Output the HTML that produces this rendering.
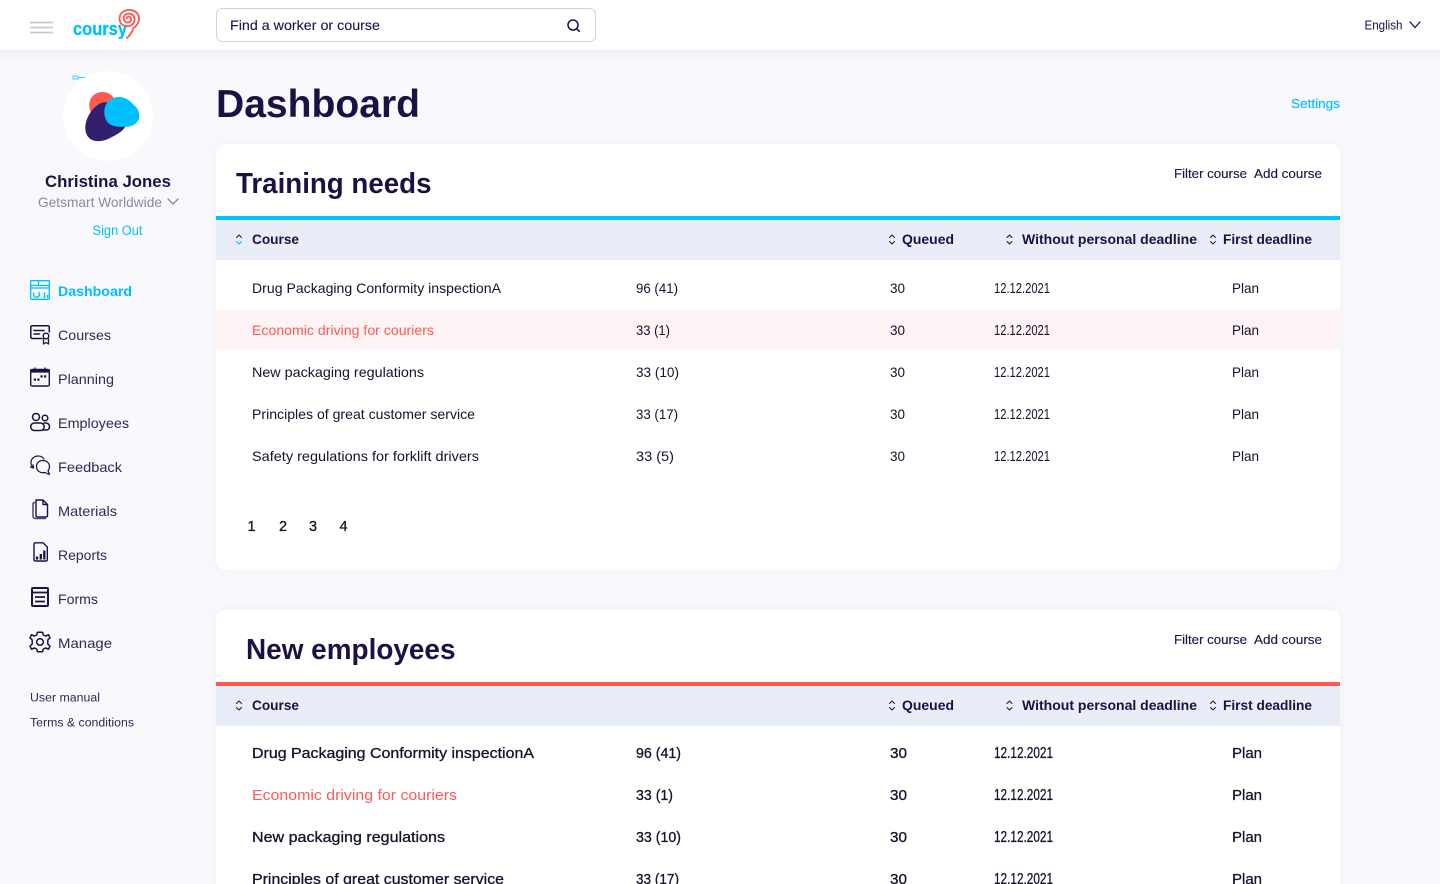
<!DOCTYPE html>
<html lang="en"><head><meta charset="utf-8"><title>Coursy Dashboard</title>
<style>
html,body{margin:0;padding:0;background:#f9f9fd;overflow:hidden;width:1440px;height:884px}
svg{display:block;position:absolute;left:0;top:0}
text{font-family:"Liberation Sans",sans-serif;fill:#1b1145}
.b{font-weight:700}
.m{stroke:#1b1145;stroke-width:.25}
.th{font-weight:700;font-size:14px}
.r{font-size:14px;fill:#15122b}
.r2{font-size:15px;fill:#15122b;stroke:#15122b;stroke-width:.3}
.d{font-size:14.5px;fill:#15122b}
.d2{font-size:15.5px;fill:#15122b;stroke:#15122b;stroke-width:.3}
.nav{font-size:14px;fill:#2f2858}
.small{font-size:11.5px;fill:#2f2858}
.red{fill:#ff5a52;stroke:none}
.i{fill:none;stroke:#1b1145;stroke-width:1.6;stroke-linecap:round;stroke-linejoin:round}
.s{fill:none;stroke:#1b1145;stroke-width:1;stroke-linecap:round;stroke-linejoin:round}
</style></head><body>
<svg width="1440" height="884" viewBox="0 0 1440 884" xmlns="http://www.w3.org/2000/svg">
<defs>
<linearGradient id="g" x1="0" y1="0" x2="0" y2="1"><stop offset="0" stop-color="#f1f1f5"/><stop offset="1" stop-color="#f9f9fd"/></linearGradient>
<filter id="sh" x="-5%" y="-10%" width="110%" height="120%"><feDropShadow dx="0" dy="0" stdDeviation="6" flood-color="#1b1145" flood-opacity=".035"/></filter>
</defs>
<rect width="1440" height="884" fill="#f9f9fd"/>
<rect y="50" width="1440" height="14" fill="url(#g)"/>
<rect width="1440" height="50" fill="#fff"/>

<!-- top bar -->
<path d="M30 22.500H53M30 27.500H53M30 32.500H53" stroke="#c8c6d6" stroke-width="1.700" fill="none"/>
<text x="73" y="35" font-size="18" font-weight="700" style="fill:#00bfff;stroke:#00bfff;stroke-width:.3" textLength="54" lengthAdjust="spacingAndGlyphs">coursy</text>
<path d="M127 38C130 35 132.500 31.500 133.500 28C138 25 140 20 138.500 15.500C136.500 10.500 130.500 9 125.500 10.500C120.500 12 118.500 17 120 21.500C121.500 26 127.500 27.500 131.500 25C135 22.500 135.500 17.500 132.500 15C129.500 12.500 125 13.500 123.800 17C123 20 125.500 23 128.500 22.500C131 22 132 19 130.300 17.300C129 16 127 16.500 126.800 18.300" fill="none" stroke="#ff5a52" stroke-width="1.900" stroke-linecap="round"/>
<rect x="216.500" y="8.500" width="379" height="33" rx="6" fill="#fff" stroke="#d2d0dd"/>
<text x="230" y="30" font-size="14" class="m" style="stroke-width:.1" textLength="150" lengthAdjust="spacingAndGlyphs">Find a worker or course</text>
<circle cx="573" cy="25" r="5" fill="none" stroke="#1b1145" stroke-width="1.500"/>
<path d="M576.800 28.800L579.300 31.300" stroke="#1b1145" stroke-width="1.500" stroke-linecap="round"/>
<text x="1364.500" y="29.500" font-size="13" textLength="38" lengthAdjust="spacingAndGlyphs">English</text>
<path d="M1410 22L1415 27.500L1420 22" class="i" style="stroke-width:1.300"/>

<!-- sidebar profile -->
<circle cx="108" cy="116" r="45" fill="#fff"/>
<path d="M73 76H78V79H73ZM78 77.500H85" fill="none" stroke="#00bfff" stroke-width=".7"/>
<path d="M89.300 105C89.300 97 95 92 103 92C111 92 116 99 116 106C112 116 100 120 94 117C91 114 89.300 110 89.300 105Z" fill="#ff5a52"/>
<path d="M85.300 128C85.300 118 92 108.500 99 104C109 98 127 108 126.500 122C126 130 118 134 111 137.500C104 141.500 97 142 92 140C88 138 85.300 134 85.300 128Z" fill="#32206f"/>
<path d="M104.300 112C104.300 103 111 97 119 97C125 97 129 100 133 104C137 107.500 139.300 111 139.300 116C139.300 122 134 126.500 126 126.800C120 127 113 127 109 123.500C106 121 104.300 117 104.300 112Z" fill="#00bfff"/>
<text x="45" y="187" font-size="17" class="b" textLength="126" lengthAdjust="spacingAndGlyphs">Christina Jones</text>
<text x="38" y="207" font-size="14" style="fill:#8b889f" textLength="124" lengthAdjust="spacingAndGlyphs">Getsmart Worldwide</text>
<path d="M168 199L173 204L178 199" fill="none" stroke="#8b889f" stroke-width="1.300" stroke-linecap="round" stroke-linejoin="round"/>
<text x="92.500" y="235" font-size="13.500" style="fill:#00bfff" textLength="50" lengthAdjust="spacingAndGlyphs">Sign Out</text>

<!-- nav -->
<g fill="none" stroke="#00bfff" stroke-width="1.300">
<rect x="30.700" y="280.700" width="18.600" height="18.600" rx="1"/>
<path d="M30.700 285.500H49.300M38.500 280.700V285.500M30.700 288H49.300"/>
<path d="M34 292.500A3 3 0 1 0 38.500 292M44.500 292.500V298M47.500 295V298" stroke-width="1.400"/>
</g>
<text x="58" y="296" font-size="14" class="b" style="fill:#00bfff" textLength="74" lengthAdjust="spacingAndGlyphs">Dashboard</text>

<path d="M42 338.500H32.500Q30.800 338.500 30.800 336.500V327.500Q30.800 325.800 32.500 325.800H47.500Q49.300 325.800 49.300 327.500V332M34 330.500H44M34 334H39.500" class="i" style="stroke-width:1.500"/>
<circle cx="46" cy="336" r="2.800" class="i" style="stroke-width:1.400"/>
<path d="M43.500 339V344L46 342.500L48.500 344V339" class="i" style="stroke-width:1.300"/>
<text x="58" y="340" class="nav" textLength="53" lengthAdjust="spacingAndGlyphs">Courses</text>

<rect x="30.700" y="369.500" width="18.600" height="16.500" rx="1.500" class="i" style="stroke-width:1.400"/>
<path d="M30.700 370H49.300V372H30.700Z" fill="#1b1145" stroke="#1b1145" stroke-width="1.300"/>
<path d="M35 367.500V369.500M45 367.500V369.500" stroke="#1b1145" stroke-width="1.300"/>
<rect x="33.800" y="378.500" width="2.200" height="2.200" fill="#1b1145"/><rect x="37.300" y="378.500" width="2.200" height="2.200" fill="#1b1145"/>
<rect x="40.500" y="375.300" width="2.200" height="2.200" fill="#1b1145"/><rect x="44" y="375.300" width="2.200" height="2.200" fill="#1b1145"/>
<text x="58" y="384" class="nav" textLength="56" lengthAdjust="spacingAndGlyphs">Planning</text>

<circle cx="36" cy="417" r="3.500" class="i" style="stroke-width:1.500"/>
<circle cx="45" cy="418" r="2.800" class="i" style="stroke-width:1.500"/>
<rect x="30.700" y="423" width="13.500" height="7.500" rx="3.700" class="i" style="stroke-width:1.500"/>
<path d="M44 423H46Q49.500 423.500 49.500 426.500Q49.500 430 46 430H43.500" class="i" style="stroke-width:1.500"/>
<text x="58" y="428" class="nav" textLength="71" lengthAdjust="spacingAndGlyphs">Employees</text>

<path d="M33.500 468C30.500 465 30 460.500 33 458C36.500 455 42 455.500 44 459M33.500 468L33 464.800M33.500 468L30.500 467" class="i" style="stroke-width:1.200"/>
<path d="M42.500 460.500C46.500 460.500 49.500 463 49.500 466.500C49.500 468 49 469.500 48 470.500L49.500 474.500L45 472.500C40.500 473.500 36.500 471 36.500 466.500C36.500 463 39 460.500 42.500 460.500Z" class="i" style="stroke-width:1.200"/>
<text x="58" y="472" class="nav" textLength="64" lengthAdjust="spacingAndGlyphs">Feedback</text>

<path d="M36 500H43L47.500 504.500V515.500Q47.500 517 46 517H37.500Q36 517 36 515.500ZM43 500V504.500H47.500" class="i" style="stroke-width:1.400"/>
<path d="M36 502.500H34.300Q33 502.500 33 504V516Q33 518.500 35.500 518.500H45.500" class="i" style="stroke-width:1.500;stroke:#4d4577"/>
<text x="58" y="516" class="nav" textLength="59" lengthAdjust="spacingAndGlyphs">Materials</text>

<path d="M35.500 542.800H43L47.300 547V559.500Q47.300 561 46 561H35.500Q34 561 34 559.500V544.300Q34 542.800 35.500 542.800Z" class="i" style="stroke-width:1.400"/>
<path d="M37 556.500V559.500M40.800 554V559.500M44.300 550.500V559.500" stroke="#1b1145" stroke-width="2.300"/>
<text x="58" y="560" class="nav" textLength="49" lengthAdjust="spacingAndGlyphs">Reports</text>

<rect x="32" y="588" width="16" height="18" rx="1" fill="none" stroke="#1b1145" stroke-width="2"/>
<path d="M32 592.500H48M35 597H45M35 601.500H45" stroke="#1b1145" stroke-width="1.800" fill="none"/>
<text x="58" y="604" class="nav" textLength="40" lengthAdjust="spacingAndGlyphs">Forms</text>

<path d="M37.500 632.200H42.500L43.300 635L45.800 636.100L48.500 634.700L50 637.800L47.800 640V644L50 646.200L48.500 649.300L45.800 647.900L43.300 649L42.500 651.800H37.500L36.700 649L34.200 647.900L31.500 649.300L30 646.200L32.200 644V640L30 637.800L31.500 634.700L34.200 636.100L36.700 635Z" class="i" style="stroke-width:1.500"/>
<circle cx="40" cy="642" r="3.300" class="i" style="stroke-width:1.500"/>
<text x="58" y="648" class="nav" textLength="54" lengthAdjust="spacingAndGlyphs">Manage</text>

<text x="30" y="701.500" class="small" textLength="70" lengthAdjust="spacingAndGlyphs">User manual</text>
<text x="30" y="726.500" class="small" textLength="104" lengthAdjust="spacingAndGlyphs">Terms &amp; conditions</text>

<!-- heading -->
<text x="216" y="117" font-size="39" class="b" textLength="204" lengthAdjust="spacingAndGlyphs">Dashboard</text>
<text x="1291" y="108" font-size="13" style="fill:#00bfff;stroke:#00bfff;stroke-width:.15" textLength="49" lengthAdjust="spacingAndGlyphs">Settings</text>

<!-- card 1 -->
<rect x="216" y="144" width="1124" height="426" rx="10" fill="#fff" filter="url(#sh)"/>
<text x="236" y="193" font-size="28.500" class="b" textLength="195.500" lengthAdjust="spacingAndGlyphs">Training needs</text>
<text x="1174" y="178" font-size="13" class="m" style="stroke-width:.12" textLength="73" lengthAdjust="spacingAndGlyphs">Filter course</text>
<text x="1254" y="178" font-size="13" class="m" style="stroke-width:.12" textLength="68" lengthAdjust="spacingAndGlyphs">Add course</text>
<rect x="216" y="216" width="1124" height="4" fill="#00c2ff"/>
<rect x="216" y="220" width="1124" height="40" fill="#e8edf8"/>
<path d="M236.500 237.500L239 235L241.500 237.500" class="s"/><path d="M236.500 241.500L239 244L241.500 241.500" class="s" style="stroke:#00bfff"/>
<path d="M889.500 237.500L892 235L894.500 237.500M889.500 241.500L892 244L894.500 241.500" class="s"/>
<path d="M1007 237.500L1009.500 235L1012 237.500M1007 241.500L1009.500 244L1012 241.500" class="s"/>
<path d="M1210.500 237.500L1213 235L1215.500 237.500M1210.500 241.500L1213 244L1215.500 241.500" class="s"/>
<text x="252" y="244" class="th" textLength="47" lengthAdjust="spacingAndGlyphs">Course</text>
<text x="902" y="244" class="th" textLength="52" lengthAdjust="spacingAndGlyphs">Queued</text>
<text x="1022" y="244" class="th" textLength="175" lengthAdjust="spacingAndGlyphs">Without personal deadline</text>
<text x="1223" y="244" class="th" textLength="89" lengthAdjust="spacingAndGlyphs">First deadline</text>

<rect x="216" y="310" width="1124" height="40" fill="#fff4f5"/>

<text x="252" y="293" class="r" textLength="249" lengthAdjust="spacingAndGlyphs">Drug Packaging Conformity inspectionA</text>
<text x="636" y="293" class="r" textLength="42" lengthAdjust="spacingAndGlyphs">96 (41)</text>
<text x="890" y="293" class="r" textLength="15" lengthAdjust="spacingAndGlyphs">30</text>
<text x="994" y="293" class="d" textLength="56" lengthAdjust="spacingAndGlyphs">12.12.2021</text>
<text x="1232" y="293" class="r" textLength="27" lengthAdjust="spacingAndGlyphs">Plan</text>

<text x="252" y="335" class="r red" textLength="182" lengthAdjust="spacingAndGlyphs">Economic driving for couriers</text>
<text x="636" y="335" class="r" textLength="34" lengthAdjust="spacingAndGlyphs">33 (1)</text>
<text x="890" y="335" class="r" textLength="15" lengthAdjust="spacingAndGlyphs">30</text>
<text x="994" y="335" class="d" textLength="56" lengthAdjust="spacingAndGlyphs">12.12.2021</text>
<text x="1232" y="335" class="r" textLength="27" lengthAdjust="spacingAndGlyphs">Plan</text>

<text x="252" y="377" class="r" textLength="172" lengthAdjust="spacingAndGlyphs">New packaging regulations</text>
<text x="636" y="377" class="r" textLength="43" lengthAdjust="spacingAndGlyphs">33 (10)</text>
<text x="890" y="377" class="r" textLength="15" lengthAdjust="spacingAndGlyphs">30</text>
<text x="994" y="377" class="d" textLength="56" lengthAdjust="spacingAndGlyphs">12.12.2021</text>
<text x="1232" y="377" class="r" textLength="27" lengthAdjust="spacingAndGlyphs">Plan</text>

<text x="252" y="419" class="r" textLength="223" lengthAdjust="spacingAndGlyphs">Principles of great customer service</text>
<text x="636" y="419" class="r" textLength="42" lengthAdjust="spacingAndGlyphs">33 (17)</text>
<text x="890" y="419" class="r" textLength="15" lengthAdjust="spacingAndGlyphs">30</text>
<text x="994" y="419" class="d" textLength="56" lengthAdjust="spacingAndGlyphs">12.12.2021</text>
<text x="1232" y="419" class="r" textLength="27" lengthAdjust="spacingAndGlyphs">Plan</text>

<text x="252" y="461" class="r" textLength="227" lengthAdjust="spacingAndGlyphs">Safety regulations for forklift drivers</text>
<text x="636" y="461" class="r" textLength="38" lengthAdjust="spacingAndGlyphs">33 (5)</text>
<text x="890" y="461" class="r" textLength="15" lengthAdjust="spacingAndGlyphs">30</text>
<text x="994" y="461" class="d" textLength="56" lengthAdjust="spacingAndGlyphs">12.12.2021</text>
<text x="1232" y="461" class="r" textLength="27" lengthAdjust="spacingAndGlyphs">Plan</text>

<g font-size="14.500" style="stroke:#15122b;stroke-width:.3">
<text x="247.500" y="531" style="fill:#15122b">1</text>
<text x="279" y="531" style="fill:#15122b">2</text>
<text x="309" y="531" style="fill:#15122b">3</text>
<text x="339.500" y="531" style="fill:#15122b">4</text>
</g>

<!-- card 2 -->
<rect x="216" y="610" width="1124" height="300" rx="10" fill="#fff" filter="url(#sh)"/>
<text x="246" y="659" font-size="28.500" class="b" textLength="209.500" lengthAdjust="spacingAndGlyphs">New employees</text>
<text x="1174" y="644" font-size="13" class="m" style="stroke-width:.12" textLength="73" lengthAdjust="spacingAndGlyphs">Filter course</text>
<text x="1254" y="644" font-size="13" class="m" style="stroke-width:.12" textLength="68" lengthAdjust="spacingAndGlyphs">Add course</text>
<rect x="216" y="682" width="1124" height="4" fill="#ff5a52"/>
<rect x="216" y="686" width="1124" height="40" fill="#e8edf8"/>
<path d="M236.500 703.500L239 701L241.500 703.500M236.500 707.500L239 710L241.500 707.500" class="s"/>
<path d="M889.500 703.500L892 701L894.500 703.500M889.500 707.500L892 710L894.500 707.500" class="s"/>
<path d="M1007 703.500L1009.500 701L1012 703.500M1007 707.500L1009.500 710L1012 707.500" class="s"/>
<path d="M1210.500 703.500L1213 701L1215.500 703.500M1210.500 707.500L1213 710L1215.500 707.500" class="s"/>
<text x="252" y="710" class="th" textLength="47" lengthAdjust="spacingAndGlyphs">Course</text>
<text x="902" y="710" class="th" textLength="52" lengthAdjust="spacingAndGlyphs">Queued</text>
<text x="1022" y="710" class="th" textLength="175" lengthAdjust="spacingAndGlyphs">Without personal deadline</text>
<text x="1223" y="710" class="th" textLength="89" lengthAdjust="spacingAndGlyphs">First deadline</text>

<text x="252" y="758" class="r2" textLength="282" lengthAdjust="spacingAndGlyphs">Drug Packaging Conformity inspectionA</text>
<text x="636" y="758" class="r2" textLength="45" lengthAdjust="spacingAndGlyphs">96 (41)</text>
<text x="890" y="758" class="r2" textLength="17" lengthAdjust="spacingAndGlyphs">30</text>
<text x="994" y="758" class="d2" textLength="59" lengthAdjust="spacingAndGlyphs">12.12.2021</text>
<text x="1232" y="758" class="r2" textLength="30" lengthAdjust="spacingAndGlyphs">Plan</text>

<text x="252" y="800" class="r2 red" textLength="205" lengthAdjust="spacingAndGlyphs">Economic driving for couriers</text>
<text x="636" y="800" class="r2" textLength="37" lengthAdjust="spacingAndGlyphs">33 (1)</text>
<text x="890" y="800" class="r2" textLength="17" lengthAdjust="spacingAndGlyphs">30</text>
<text x="994" y="800" class="d2" textLength="59" lengthAdjust="spacingAndGlyphs">12.12.2021</text>
<text x="1232" y="800" class="r2" textLength="30" lengthAdjust="spacingAndGlyphs">Plan</text>

<text x="252" y="842" class="r2" textLength="193" lengthAdjust="spacingAndGlyphs">New packaging regulations</text>
<text x="636" y="842" class="r2" textLength="45" lengthAdjust="spacingAndGlyphs">33 (10)</text>
<text x="890" y="842" class="r2" textLength="17" lengthAdjust="spacingAndGlyphs">30</text>
<text x="994" y="842" class="d2" textLength="59" lengthAdjust="spacingAndGlyphs">12.12.2021</text>
<text x="1232" y="842" class="r2" textLength="30" lengthAdjust="spacingAndGlyphs">Plan</text>

<text x="252" y="884" class="r2" textLength="252" lengthAdjust="spacingAndGlyphs">Principles of great customer service</text>
<text x="636" y="884" class="r2" textLength="43" lengthAdjust="spacingAndGlyphs">33 (17)</text>
<text x="890" y="884" class="r2" textLength="17" lengthAdjust="spacingAndGlyphs">30</text>
<text x="994" y="884" class="d2" textLength="59" lengthAdjust="spacingAndGlyphs">12.12.2021</text>
<text x="1232" y="884" class="r2" textLength="30" lengthAdjust="spacingAndGlyphs">Plan</text>
</svg>
</body></html>
